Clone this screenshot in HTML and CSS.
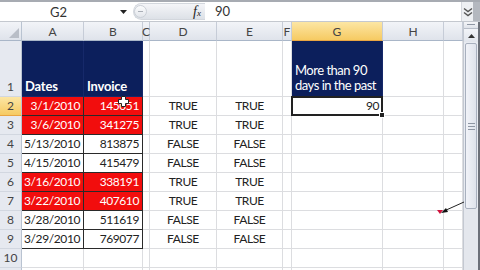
FILE: index.html
```html
<!DOCTYPE html>
<html lang="en">
<head>
    <meta charset="UTF-8">
    <title>Invoices</title>
    <link rel="stylesheet" href="styles.css">
</head>
<body>
    <div class="fbar">
        <div class="namebox">
            <span>G2</span>
            <svg class="dd" width="7" height="4" viewBox="0 0 7 4"><path d="M0 0h7L3.5 4z" fill="#222"/></svg>
        </div>
        <div class="pill">
            <span class="knob"></span>
            <span class="fx"><i>f</i><small>x</small></span>
        </div>
        <div class="formula">90</div>
        <div class="expand">
            <svg width="10" height="10" viewBox="0 0 10 10"><path d="M1 1.5l4 3 4-3M1 5.5l4 3 4-3" fill="none" stroke="#555" stroke-width="1.4"/></svg>
        </div>
        <div class="fedge"></div>
    </div>

    <div class="main">
        <div class="sheet">
            <div class="corner">
                <svg width="10" height="10" viewBox="0 0 10 10"><path d="M10 0v10H0z" fill="#b9bec7"/></svg>
            </div>
            <div class="h">A</div>
            <div class="h">B</div>
            <div class="h">C</div>
            <div class="h">D</div>
            <div class="h">E</div>
            <div class="h">F</div>
            <div class="h on">G</div>
            <div class="h">H</div>
            <div class="h"></div>

            <div class="r">1</div>
            <div class="c navy b">Dates</div>
            <div class="c navy b">Invoice</div>
            <div class="c"></div>
            <div class="c"></div>
            <div class="c"></div>
            <div class="c"></div>
            <div class="c navy wrap">More than 90 days in the past</div>
            <div class="c"></div>
            <div class="c"></div>

            <div class="r on">2</div>
            <div class="c t red n">3/1/2010</div>
            <div class="c t red n">145051</div>
            <div class="c"></div>
            <div class="c m">TRUE</div>
            <div class="c m">TRUE</div>
            <div class="c"></div>
            <div class="c n sel">90</div>
            <div class="c"></div>
            <div class="c"></div>

            <div class="r">3</div>
            <div class="c t red n">3/6/2010</div>
            <div class="c t red n">341275</div>
            <div class="c"></div>
            <div class="c m">TRUE</div>
            <div class="c m">TRUE</div>
            <div class="c"></div>
            <div class="c"></div>
            <div class="c"></div>
            <div class="c"></div>

            <div class="r">4</div>
            <div class="c t n">5/13/2010</div>
            <div class="c t n">813875</div>
            <div class="c"></div>
            <div class="c m">FALSE</div>
            <div class="c m">FALSE</div>
            <div class="c"></div>
            <div class="c"></div>
            <div class="c"></div>
            <div class="c"></div>

            <div class="r">5</div>
            <div class="c t n">4/15/2010</div>
            <div class="c t n">415479</div>
            <div class="c"></div>
            <div class="c m">FALSE</div>
            <div class="c m">FALSE</div>
            <div class="c"></div>
            <div class="c"></div>
            <div class="c"></div>
            <div class="c"></div>

            <div class="r">6</div>
            <div class="c t red n">3/16/2010</div>
            <div class="c t red n">338191</div>
            <div class="c"></div>
            <div class="c m">TRUE</div>
            <div class="c m">TRUE</div>
            <div class="c"></div>
            <div class="c"></div>
            <div class="c"></div>
            <div class="c"></div>

            <div class="r">7</div>
            <div class="c t red n">3/22/2010</div>
            <div class="c t red n">407610</div>
            <div class="c"></div>
            <div class="c m">TRUE</div>
            <div class="c m">TRUE</div>
            <div class="c"></div>
            <div class="c"></div>
            <div class="c"></div>
            <div class="c"></div>

            <div class="r">8</div>
            <div class="c t n">3/28/2010</div>
            <div class="c t n">511619</div>
            <div class="c"></div>
            <div class="c m">FALSE</div>
            <div class="c m">FALSE</div>
            <div class="c"></div>
            <div class="c"></div>
            <div class="c"></div>
            <div class="c"></div>

            <div class="r">9</div>
            <div class="c t n">3/29/2010</div>
            <div class="c t n">769077</div>
            <div class="c"></div>
            <div class="c m">FALSE</div>
            <div class="c m">FALSE</div>
            <div class="c"></div>
            <div class="c"></div>
            <div class="c"></div>
            <div class="c"></div>

            <div class="r">10</div>
            <div class="c"></div>
            <div class="c"></div>
            <div class="c"></div>
            <div class="c"></div>
            <div class="c"></div>
            <div class="c"></div>
            <div class="c"></div>
            <div class="c"></div>
            <div class="c"></div>

            <div class="r"></div>
            <div class="c"></div>
            <div class="c"></div>
            <div class="c"></div>
            <div class="c"></div>
            <div class="c"></div>
            <div class="c"></div>
            <div class="c"></div>
            <div class="c"></div>
            <div class="c"></div>
        </div>

        <div class="vscroll">
            <div class="split"></div>
            <div class="up">
                <svg width="7" height="4" viewBox="0 0 7 4"><path d="M0 4h7L3.5 0z" fill="#333"/></svg>
            </div>
            <div class="thumb"><span class="grip"></span></div>
            <div class="track"></div>
        </div>
        <div class="edge"></div>
    </div>

    <!-- mouse cursor over B2 -->
    <svg class="cursor" width="11" height="11" viewBox="0 0 11 11">
        <path d="M3.5 0.5h4v3h3v4h-3v3h-4v-3h-3v-4h3z" fill="#fff" stroke="#222" stroke-width="1"/>
    </svg>

    <!-- pointer drawn on the sheet -->
    <svg class="pointer" width="30" height="18" viewBox="0 0 30 18">
        <path d="M1 10h6l-3 4z" fill="#d0103a"/>
        <path d="M28 2L8 11" stroke="#222" stroke-width="1"/>
        <path d="M5 13l5-5 2 4z" fill="#111"/>
    </svg>
</body>
</html>
```

FILE: styles.css
```css
html,body{
    margin:0;
    height:100%;
}
body{
    width:480px;
    height:270px;
    overflow:hidden;
    position:relative;
    background:#fff;
    font-family:Lato,"Liberation Sans",sans-serif;
    color:#222;
}

/* formula bar */
.fbar{
    display:flex;
    height:22px;
    box-sizing:border-box;
    border-top:2px solid #a7abb2;
    border-bottom:1px solid #c4c8cf;
}
.namebox{
    width:133px;
    display:flex;
    align-items:center;
    font-size:13px;
    color:#333;
}
.namebox span{
    margin-left:50px;
}
.namebox .dd{
    margin-left:auto;
    margin-right:6px;
}
.pill{
    width:72px;
    margin:1px 0;
    box-sizing:border-box;
    border:1px solid #d3d7dd;
    border-right:0;
    border-radius:9px 0 0 9px;
    background:linear-gradient(#f4f5f8,#dde1e7);
    display:flex;
    align-items:center;
    justify-content:space-between;
}
.knob{
    width:13px;
    height:13px;
    border-radius:50%;
    box-sizing:border-box;
    border:1px solid #cbd0d7;
    background:linear-gradient(#fbfcfd,#e3e6eb);
    position:relative;
}
.knob:after{
    content:"";
    position:absolute;
    left:3px;
    top:5px;
    width:5px;
    height:1px;
    background:#a9aeb6;
}
.fx{
    font-family:"Liberation Serif",serif;
    font-size:14px;
    margin-right:4px;
    color:#222;
}
.fx small{
    font-size:9px;
    font-style:italic;
}
.formula{
    flex:1;
    padding-left:10px;
    font-size:13px;
    line-height:19px;
    color:#333;
}
.expand{
    width:11px;
    display:flex;
    align-items:center;
    justify-content:center;
    background:#eef0f3;
    border-left:1px solid #d5d8de;
}
.fedge{
    width:7px;
    background:#b4b8bf;
}

/* grid */
.main{
    display:flex;
    height:248px;
}
.sheet{
    width:463px;
    display:grid;
    grid-template-columns:22px 62px 59px 7px 67px 66px 9px 91px 61px 19px;
    grid-template-rows:19px 56px repeat(9,19px) 1fr;
    font-size:12px;
}
.corner,
.h,
.r{
    box-sizing:border-box;
    background:linear-gradient(#f2f4f8,#dfe3eb);
    color:#444;
    display:flex;
    align-items:center;
    justify-content:center;
}
.corner{
    border-right:1px solid #b9c3d1;
    border-bottom:1px solid #a9b6c8;
    align-items:flex-end;
    justify-content:flex-end;
    padding:0 2px 2px 0;
}
.h{
    border-right:1px solid #c6ccd7;
    border-bottom:1px solid #a9b6c8;
    font-size:12px;
}
.r{
    background:#e6e9f0;
    border-right:1px solid #b9c3d1;
    border-bottom:1px solid #d2d7e0;
    align-items:flex-end;
    padding-bottom:2px;
    font-size:12px;
}
.h.on,
.r.on{
    background:linear-gradient(#fce6a4,#f6ca62);
    border-bottom-color:#e9a542;
}
.c{
    box-sizing:border-box;
    border-right:1px solid #dcdde0;
    border-bottom:1px solid #dcdde0;
    display:flex;
    align-items:flex-end;
    padding:0 3px 2px;
    white-space:nowrap;
    letter-spacing:-0.4px;
    position:relative;
}
.n{
    justify-content:flex-end;
}
.m{
    justify-content:center;
}
.t{
    border-color:#2a2a2a;
}
.red{
    background:#f20d0d;
    color:#fff;
}
.navy{
    background:#0c1f5c;
    border-color:#16296a;
    color:#fff;
    font-size:13px;
    letter-spacing:-0.2px;
}
.b{
    font-weight:bold;
}
.wrap{
    white-space:normal;
    line-height:15px;
    padding:0 0 3px 3px;
    letter-spacing:-0.5px;
}
.sel:after{
    content:"";
    position:absolute;
    left:-1px;
    top:-1px;
    right:-1px;
    bottom:-1px;
    border:2px solid #222;
}
.sel:before{
    content:"";
    position:absolute;
    right:-3px;
    bottom:-3px;
    width:4px;
    height:4px;
    background:#222;
    border:1px solid #fff;
    z-index:1;
}

/* scroll bar */
.vscroll{
    width:15px;
    display:flex;
    flex-direction:column;
    background:#e8ebf1;
    border-left:1px solid #c3c8d1;
}
.split{
    height:6px;
    border-bottom:1px solid #b7bdc8;
    background:linear-gradient(#f4f5f8,#dfe3ea);
    position:relative;
}
.split:after{
    content:"";
    position:absolute;
    left:3px;
    right:3px;
    top:2px;
    height:1px;
    background:#8e96a3;
}
.up{
    height:13px;
    display:flex;
    align-items:center;
    justify-content:center;
    background:linear-gradient(#f2f4f8,#e1e5ec);
}
.thumb{
    height:166px;
    margin:1px 1px 0;
    box-sizing:border-box;
    border:1px solid #a8b0be;
    border-radius:2px;
    background:linear-gradient(90deg,#f1f3f8,#dfe3ec);
    display:flex;
    align-items:center;
    justify-content:center;
}
.grip{
    width:7px;
    height:5px;
    border-top:1px solid #8e96a3;
    border-bottom:1px solid #8e96a3;
    position:relative;
}
.grip:after{
    content:"";
    position:absolute;
    left:0;
    right:0;
    top:2px;
    height:1px;
    background:#8e96a3;
}
.track{
    flex:1;
    background:#e4e7ed;
}
.edge{
    width:2px;
    background:#6c7079;
}

/* overlays */
.cursor{
    position:absolute;
    left:118px;
    top:96px;
}
.pointer{
    position:absolute;
    left:436px;
    top:200px;
}
```
